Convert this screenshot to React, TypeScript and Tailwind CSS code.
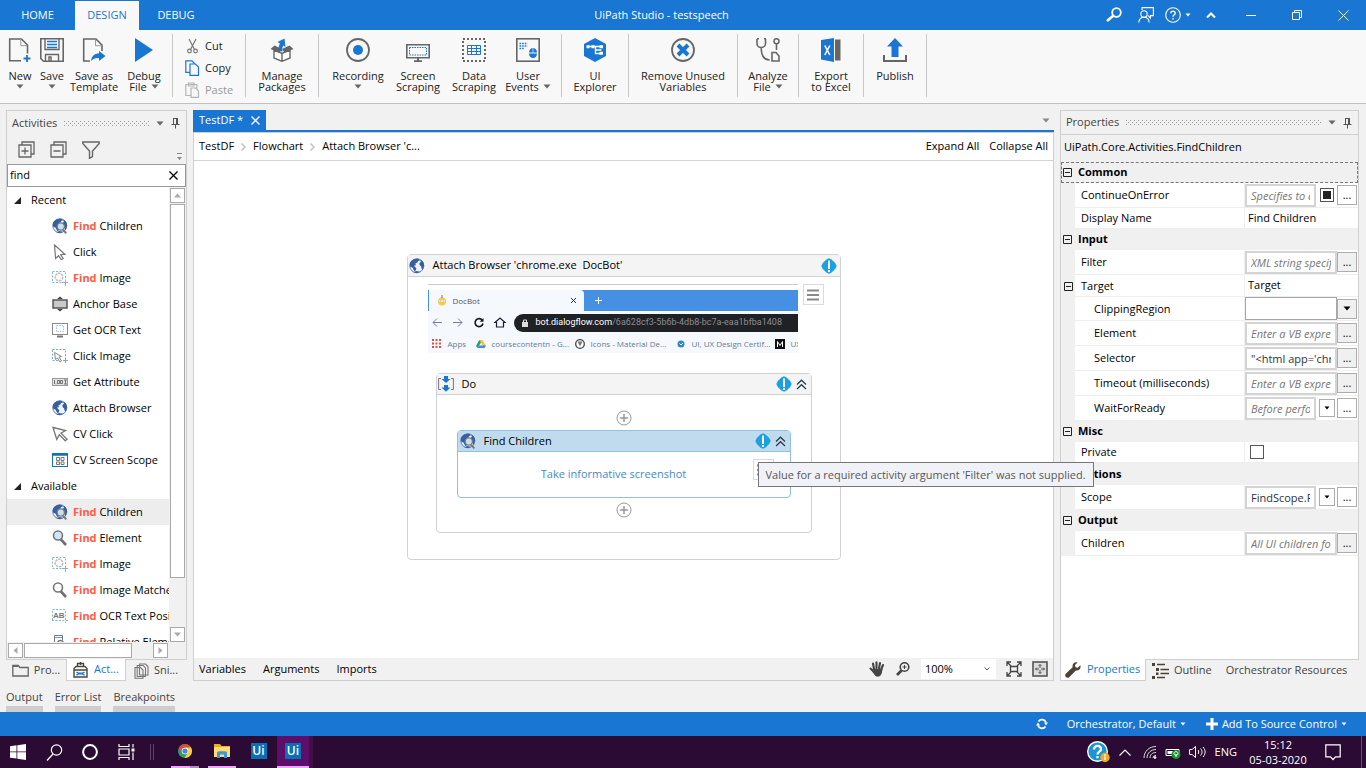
import type { ReactNode } from "react";
import clsx from "clsx";

type IconProps = { className?: string };

/* ---------- shared small icons ---------- */

function CaretDown({ className = "text-[#666]" }: IconProps) {
	return (
		<svg width="8" height="5" viewBox="0 0 8 5" className={clsx("shrink-0", className)}>
			<path d="M0.5 0.5h7L4 4.5z" fill="currentColor" />
		</svg>
	);
}

function SmallCaret() {
	return (
		<svg width="6" height="4" viewBox="0 0 6 4" className="shrink-0">
			<path d="M0.5 0.5h5L3 3.5z" fill="currentColor" />
		</svg>
	);
}

function PinIcon() {
	return (
		<svg width="9" height="12" viewBox="0 0 9 12" fill="none" stroke="#555" strokeWidth="1" className="shrink-0">
			<path d="M2.500 1v6M2 1.500h4.500M5.500 1v6M6.500 1v6M0.500 7.500h8M4.500 8v3.500" />
		</svg>
	);
}

function CloseIcon({ className }: IconProps) {
	return (
		<svg width="9" height="9" viewBox="0 0 9 9" className={className} fill="none" stroke="currentColor" strokeWidth="1.3">
			<path d="M0.500 0.500l8 8M8.500 0.500l-8 8" />
		</svg>
	);
}

function DotGrip({ id }: { id: string }) {
	return (
		<svg className="h-[5px] w-0 flex-1" shapeRendering="crispEdges">
			<pattern id={id} width="4" height="4" patternUnits="userSpaceOnUse">
				<path d="M0 0h1v1H0zM2 2h1v1H2z" fill="#9a9a9a" />
			</pattern>
			<rect width="100%" height="100%" fill={`url(#${id})`} />
		</svg>
	);
}

function GlobeIcon({ lens = false }: { lens?: boolean }) {
	return (
		<svg width="16" height="16" viewBox="0 0 16 16" className="shrink-0">
			<circle cx="7.800" cy="7.800" r="7" fill="#eef3fa" stroke="#5f80b3" strokeWidth="1" />
			<path d="M1.800 3.600C3.800 1 7 .2 10 1l1 1.600-2 .4-.5 1.500-2 .8.4 2-1.800.2L6 9l1.400 1.200-.6 2.400-1.600.4L3.600 9.800 1 8.400C.4 6.500 1 4.900 1.800 3.600z" fill="#365f9f" />
			<path d="M11.200 1.400c2.400 1 3.900 3.400 3.900 5.800l-1.400 4.600-1.200-1.200-.4-2.400-1.400-1-.4-2 1.600-1.400z" fill="#365f9f" />
			<path d="M4.300 14l3.200-1 3.700.8c-2 1.400-4.900 1.400-6.900.2z" fill="#365f9f" />
			{lens && (
				<>
					<path d="M11 11.500l3.200 3.800" stroke="#7a7a7a" strokeWidth="2" />
					<circle cx="8.800" cy="8.500" r="3.600" fill="#c9dff0" stroke="#7a7a7a" strokeWidth="1.300" />
				</>
			)}
		</svg>
	);
}

function CursorIcon() {
	return (
		<svg width="16" height="16" viewBox="0 0 16 16" fill="#fff" stroke="#777" strokeWidth="1.200" className="shrink-0">
			<path d="M2.500 1l10.500 9.200-4.300.5 2.500 3.800-2 1.200-2.600-4-3 2.800z" />
		</svg>
	);
}

function CvCursorIcon() {
	return (
		<svg width="16" height="16" viewBox="0 0 16 16" fill="#fff" stroke="#777" strokeWidth="1.300" className="shrink-0">
			<path d="M1 1.500l12.500 3-4.500 2.700 6 6-1.700 1.600-6-6-2.600 4.500z" />
		</svg>
	);
}

function FindImageIcon() {
	return (
		<svg width="16" height="16" viewBox="0 0 16 16" fill="none" className="shrink-0">
			<rect x="0.500" y="1.500" width="13" height="11" stroke="#7fb4dc" strokeDasharray="2 1.500" />
			<path d="M10 12.500h6M13.500 10v6" stroke="#7fb4dc" />
			<circle cx="7" cy="7" r="3.800" fill="#fafafa" stroke="#bbb" strokeWidth="1.500" strokeDasharray="2.500 0.800" />
		</svg>
	);
}

function AnchorIcon() {
	return (
		<svg width="16" height="16" viewBox="0 0 16 16" className="shrink-0">
			<rect x="1" y="4" width="14" height="8" fill="#c9c9c9" stroke="#555" strokeWidth="1.500" />
			<path d="M5 3l3-2.500L11 3zM5 13l3 2.500L11 13z" fill="#444" />
		</svg>
	);
}

function OcrIcon() {
	return (
		<svg width="16" height="16" viewBox="0 0 16 16" fill="none" className="shrink-0">
			<rect x="0.500" y="1.500" width="15" height="11" stroke="#888" />
			<rect x="4.500" y="3.500" width="7" height="6" stroke="#9cc9e8" strokeDasharray="1.500 1" />
			<path d="M5 14.500h6" stroke="#777" strokeWidth="2" />
		</svg>
	);
}

function ClickImageIcon() {
	return (
		<svg width="16" height="16" viewBox="0 0 16 16" fill="none" className="shrink-0">
			<rect x="0.500" y="1.500" width="13" height="11" stroke="#6fabd8" strokeDasharray="2 1.500" />
			<path d="M11 12.500h5M13.500 10v5" stroke="#6fabd8" />
			<path d="M2.500 4.500l7 4-2.500.5 2.500 4-1.500 1-2.500-4-2 1.500z" fill="#fff" stroke="#888" />
		</svg>
	);
}

function AttributeIcon() {
	return (
		<svg width="16" height="16" viewBox="0 0 16 16" fill="none" className="shrink-0">
			<rect x="0.500" y="4.500" width="15" height="7" fill="#e4e4e4" stroke="#999" />
			<path d="M2.500 6v4M4 9.500v.8M5.500 6.500h2v3h-2zM8.500 6.500h2v3h-2zM12 6h3M13.500 6v4M12 10h3" stroke="#666" strokeWidth="0.900" />
		</svg>
	);
}

function ScopeIcon() {
	return (
		<svg width="16" height="16" viewBox="0 0 16 16" fill="none" className="shrink-0">
			<rect x="0.500" y="1.500" width="15" height="13" stroke="#0d74b8" />
			<path d="M0 2.500h16" stroke="#0d74b8" strokeWidth="2.500" />
			<path d="M4.500 5.500h3v3h-3zM9 5.500h3v3H9zM4.500 10h3v2.500h-3zM9 10h3v2.500H9z" stroke="#777" />
		</svg>
	);
}

function LensIcon({ fill = "#cfe8f7" }: { fill?: string }) {
	return (
		<svg width="16" height="16" viewBox="0 0 16 16" className="shrink-0">
			<path d="M8.500 9l5.500 6" stroke="#707070" strokeWidth="2.600" />
			<circle cx="6" cy="5.500" r="4.500" fill={fill} stroke="#777" strokeWidth="1.600" />
		</svg>
	);
}

function AbIcon() {
	return (
		<svg width="16" height="16" viewBox="0 0 16 16" fill="none" className="shrink-0">
			<path d="M.5 12V1.500h13" stroke="#7fb4dc" strokeDasharray="2 1.500" />
			<path d="M0 12.500h16M13.500 3v12" stroke="#7fb4dc" strokeDasharray="2 1.500" />
			<text x="1" y="10" fontSize="8" fontWeight="700" fill="#777" fontFamily="Liberation Sans">AB</text>
		</svg>
	);
}

function RelativeIcon() {
	return (
		<svg width="16" height="16" viewBox="0 0 16 16" fill="none" className="shrink-0">
			<path d="M6 13.500H2.500v-12h8V6" stroke="#777" />
			<path d="M3 3.500h7" stroke="#5b9fd0" />
			<circle cx="8.500" cy="9.500" r="3" stroke="#777" strokeWidth="1.400" />
		</svg>
	);
}

function WarnIcon() {
	return (
		<svg width="16" height="16" viewBox="0 0 16 16" className="shrink-0">
			<path d="M8 .3l2.600 1.200 3.600 3.600 1.500 2.900-1.500 2.900-3.600 3.600L8 15.700l-2.600-1.200-3.600-3.600L.3 8l1.500-2.900 3.600-3.600z" fill="#1ba1e2" />
			<path d="M7 2.500h2V11H7zM7 12h2v2H7z" fill="#fff" />
		</svg>
	);
}

function DoubleUp() {
	return (
		<svg width="11" height="11" viewBox="0 0 11 11" fill="none" stroke="#2d3a4a" strokeWidth="1.200" className="shrink-0">
			<path d="M1 5.500L5.500 1.200 10 5.500M1 10l4.500-4.300L10 10" />
		</svg>
	);
}

function PlusCircle() {
	return (
		<button aria-label="Add activity" className="block size-4">
			<svg width="16" height="16" viewBox="0 0 16 16" fill="none" stroke="#999">
				<circle cx="8" cy="8" r="7" />
				<path d="M8 4v8M4 8h8" strokeWidth="1.500" />
			</svg>
		</button>
	);
}

/* ---------- title bar ---------- */

function TitleBar() {
	return (
		<header className="flex h-[30px] items-stretch bg-[#1976d2] text-[11px] text-white">
			<button className="w-[75px]">HOME</button>
			<button className="mt-px w-16 bg-[#f8f8f8] text-[#1976d2]">DESIGN</button>
			<button className="w-[74px]">DEBUG</button>
			<h1 className="flex flex-1 items-center justify-center pl-3">UiPath Studio - testspeech</h1>
			<div className="flex items-center">
				<button aria-label="Search" className="flex w-8 justify-center">
					<svg width="16" height="16" viewBox="0 0 16 16" fill="none" stroke="#fff">
						<circle cx="10.500" cy="5.500" r="4.300" strokeWidth="1.800" />
						<path d="M7.500 8.500L1 14" strokeWidth="2.600" />
					</svg>
				</button>
				<button aria-label="Feedback" className="flex w-8 justify-center">
					<svg width="16" height="16" viewBox="0 0 16 16" fill="none" stroke="#fff" strokeWidth="1.100">
						<circle cx="6" cy="7" r="3.200" />
						<path d="M.8 15.500c.3-3.500 2.200-5.300 5.200-5.300s5 1.800 5.200 5.300M4 3V.600h11.400v8h-3V11l-2.200-2.400" />
					</svg>
				</button>
				<button aria-label="Help" className="flex w-8 items-center justify-center gap-1">
					<svg width="16" height="16" viewBox="0 0 16 16" fill="none" stroke="#fff" strokeWidth="1.100">
						<circle cx="8" cy="8" r="7.300" />
						<path d="M5.800 6.300c0-3 4.600-2.800 4.400 0C10 7.700 8 7.800 8 9.800M8 11v1.400" strokeWidth="1.400" />
					</svg>
					<SmallCaret />
				</button>
				<button aria-label="Collapse ribbon" className="flex w-[34px] justify-center">
					<svg width="10" height="7" viewBox="0 0 10 7" fill="none" stroke="#fff" strokeWidth="2">
						<path d="M1 5.500l4-4 4 4" />
					</svg>
				</button>
				<button aria-label="Minimize" className="flex w-[46px] justify-center">
					<svg width="10" height="10" viewBox="0 0 10 10" stroke="#fff"><path d="M0 5.500h10" /></svg>
				</button>
				<button aria-label="Restore" className="flex w-[46px] justify-center">
					<svg width="10" height="10" viewBox="0 0 10 10" fill="none" stroke="#fff">
						<path d="M.5 2.500h7v7h-7zM2.500 2.500v-2h7v7h-2" />
					</svg>
				</button>
				<button aria-label="Close" className="flex w-[46px] justify-center">
					<svg width="11" height="11" viewBox="0 0 11 11" stroke="#fff"><path d="M.5.5l10 10M10.500.5l-10 10" /></svg>
				</button>
			</div>
		</header>
	);
}

/* ---------- ribbon ---------- */

function RibbonIcon({ children }: { children: ReactNode }) {
	return (
		<svg width="24" height="24" viewBox="0 0 24 24" fill="none" className="shrink-0">
			{children}
		</svg>
	);
}

type RibbonButtonProps = { width: string; icon: ReactNode; lines: string[]; caret?: "below" | "inline" };

function RibbonButton({ width, icon, lines, caret }: RibbonButtonProps) {
	return (
		<button className={clsx("flex flex-col items-center pt-2 whitespace-nowrap", width)}>
			<RibbonIcon>{icon}</RibbonIcon>
			<span className="mt-2 flex flex-col items-center leading-[11px]">
				{lines.map((line, i) => (
					<span key={line} className="flex items-center gap-1">
						{line}
						{caret === "inline" && i === lines.length - 1 && <CaretDown />}
					</span>
				))}
				{caret === "below" && (
					<span className="flex h-[11px] items-center">
						<CaretDown />
					</span>
				)}
			</span>
		</button>
	);
}

function Separator() {
	return <div className="mt-1 h-[63px] w-px bg-[#c8c8c8]" />;
}

const GRAY = "#666";
const BLUE = "#1976d2";

function Ribbon() {
	return (
		<div className="flex h-[74px] border-b border-[#c0c0c0] bg-[#f8f8f8] pl-1 text-[11px] text-[#222]">
			<RibbonButton width="w-8" lines={["New"]} caret="below" icon={
				<>
					<path d="M13 22.700H1.700V1h11.800l6 6v8.500" stroke={GRAY} strokeWidth="1.600" />
					<path d="M12.800 1.500v6.200h6.500" stroke="#999" />
					<path d="M19 17v7M15.500 20.500h7" stroke={BLUE} strokeWidth="1.800" />
				</>
			} />
			<RibbonButton width="w-8" lines={["Save"]} caret="below" icon={
				<>
					<path d="M.8.8h22.400v22.400H3.500L.8 20.500z" stroke={GRAY} strokeWidth="1.600" />
					<path d="M5 1v10.500h14V1M5.500 23v-6.500h13V23M9 23v-4h2v4" stroke={GRAY} strokeWidth="1.400" />
					<path d="M7 3.500h10M7 6.500h10M7 9.500h10" stroke={BLUE} strokeWidth="1.300" />
				</>
			} />
			<RibbonButton width="w-[52px]" lines={["Save as", "Template"]} icon={
				<>
					<path d="M8 23H1.700V1H14l6 6v6" stroke={GRAY} strokeWidth="1.600" />
					<path d="M13.500 1.500v6.200H20" stroke="#999" />
					<path d="M9 23c.5-5 3.500-7.500 8-7.500V13l6.500 5-6.500 5v-3c-3.500-.3-6 .8-8 3z" fill={BLUE} />
				</>
			} />
			<RibbonButton width="w-12" lines={["Debug", "File"]} caret="inline" icon={<path d="M3 0v24l18-12z" fill={BLUE} />} />
			<div className="w-1" />
			<Separator />
			<div className="flex w-[72px] flex-col pt-[5px] pl-3">
				<button className="flex h-[22px] items-center gap-1">
					<svg width="16" height="16" viewBox="0 0 16 16" fill="none" stroke="#777" strokeWidth="1.200">
						<path d="M4 1l5.500 10.500M11 1L5.500 11.500" />
						<circle cx="4.500" cy="13" r="1.800" />
						<circle cx="10.500" cy="13" r="1.800" />
					</svg>
					Cut
				</button>
				<button className="flex h-[22px] items-center gap-1">
					<svg width="16" height="16" viewBox="0 0 16 16" fill="#f8f8f8" stroke={BLUE} strokeWidth="1.200">
						<path d="M.8.8h6l2.500 2.500v9H.8z" />
						<path d="M5 4h5.500L13.500 7v8.300H5z" />
					</svg>
					Copy
				</button>
				<button disabled className="flex h-[22px] items-center gap-1 text-[#999]">
					<svg width="16" height="16" viewBox="0 0 16 16" fill="#f8f8f8" stroke="#b5b5b5" strokeWidth="1.200">
						<path d="M.8 2.500h11v11H.8zM3.500 1h5.500v3H3.500z" />
						<path d="M6 6h4.500L13.500 9v6.300H6z" />
					</svg>
					Paste
				</button>
			</div>
			<Separator />
			<RibbonButton width="w-[72px]" lines={["Manage", "Packages"]} icon={
				<>
					<path d="M4 12v8l8 3.300 8-3.300v-8l-8 3.500zM12 15.500V23" fill="#fff" stroke={GRAY} strokeWidth="1.400" />
					<path d="M4.500 7.500l7.500 3.500-2.500 3.700L.5 11zM19.500 7.500L12 11l2.500 3.700 9-3.700z" fill={GRAY} />
					<path d="M9 13c-.5-3-.3-5.500 1-7.500L7.500 4 14.500.5 15.500 9l-2.200-1.500C12.300 9 12 11 12.500 13.500z" fill={BLUE} />
				</>
			} />
			<Separator />
			<div className="w-[5px]" />
			<RibbonButton width="w-[68px]" lines={["Recording"]} caret="below" icon={
				<>
					<circle cx="12" cy="12" r="11" stroke={GRAY} strokeWidth="1.800" />
					<circle cx="12" cy="12" r="5" fill={BLUE} />
				</>
			} />
			<RibbonButton width="w-[52px]" lines={["Screen", "Scraping"]} icon={
				<>
					<path d="M.8 6.800h22.400v13H.8z" stroke={GRAY} strokeWidth="1.600" />
					<path d="M3.500 9.500h17v7.500h-17z" stroke={BLUE} strokeDasharray="1.500 1" />
					<path d="M12 20v3M8 23.300h8" stroke={GRAY} strokeWidth="2" />
				</>
			} />
			<RibbonButton width="w-[60px]" lines={["Data", "Scraping"]} icon={
				<>
					<rect x="1" y="1" width="22" height="22" stroke={GRAY} strokeWidth="2" strokeDasharray="2 2" />
					<path d="M5.500 7.500h13v9h-13zM5.500 10.500h13M5.500 13.500h13M9.500 7.500v9M14.500 7.500v9" stroke={BLUE} />
				</>
			} />
			<RibbonButton width="w-12" lines={["User", "Events"]} caret="inline" icon={
				<>
					<rect x=".8" y=".8" width="22.400" height="22.400" stroke={GRAY} strokeWidth="1.600" />
					<path d="M3.500 5.500h8M3.500 8h8M3.500 10.500h5" stroke={BLUE} strokeWidth="1.600" strokeDasharray="1.600 1" />
					<path d="M13 14.500c0-6 8-6 8 0zM13 15.500h8c0 6-8 6-8 0z" fill={BLUE} />
					<path d="M17 10v4.500" stroke="#f8f8f8" strokeWidth="0.700" />
				</>
			} />
			<div className="w-[9px]" />
			<Separator />
			<RibbonButton width="w-[66px]" lines={["UI", "Explorer"]} icon={
				<>
					<path d="M12 0l11 6v12l-11 6-11-6V6z" fill={BLUE} />
					<path d="M4.500 8.500h14M9.500 8.500h3v7h6M12.500 12h6" stroke="#fff" strokeWidth="1.400" />
					<path d="M3.500 7.200h3v3h-3zM8.500 7.200h3v3h-3zM16.500 7.200h3.500v3h-3.500zM16.500 13.800h3.500v3h-3.500z" fill="#fff" />
				</>
			} />
			<Separator />
			<RibbonButton width="w-[108px]" lines={["Remove Unused", "Variables"]} icon={
				<>
					<circle cx="12" cy="12" r="11" stroke={GRAY} strokeWidth="1.800" />
					<path d="M7 7l10 10M17 7L7 17" stroke={BLUE} strokeWidth="4" />
				</>
			} />
			<Separator />
			<RibbonButton width="w-[60px]" lines={["Analyze", "File"]} caret="inline" icon={
				<>
					<path d="M1 .8h2M8 .8h2M1 1v4.500C1 8 3 9.500 5.200 9.500S9.500 8 9.500 5.500V1M5.200 9.500c0 7 1.800 12.500 8.500 12.500" stroke={GRAY} strokeWidth="1.600" />
					<circle cx="20.500" cy="3.300" r="2.500" stroke={GRAY} strokeWidth="1.500" />
					<path d="M20.500 6v6M16 14.500h4l3 3.500v5h-7z" stroke={GRAY} strokeWidth="1.600" />
				</>
			} />
			<Separator />
			<RibbonButton width="w-16" lines={["Export", "to Excel"]} icon={
				<>
					<path d="M2 2l13-2v24L2 21.500z" fill={BLUE} />
					<path d="M16 1.500h5.500v21H16z" fill={GRAY} />
					<path d="M5.800 7.500l5 9.500M10.800 7.500l-5 9.500" stroke="#fff" strokeWidth="1.600" />
				</>
			} />
			<Separator />
			<RibbonButton width="w-[62px]" lines={["Publish"]} icon={
				<>
					<path d="M12 0l8 8.500h-4.500V19h-7V8.500H4z" fill={BLUE} />
					<path d="M1 17v6h22v-6" stroke={GRAY} strokeWidth="2" />
				</>
			} />
			<Separator />
		</div>
	);
}

/* ---------- activities panel ---------- */

type Activity = { icon: ReactNode; find?: boolean; label: string; active?: boolean };

const recent: Activity[] = [
	{ icon: <GlobeIcon lens />, find: true, label: "Children" },
	{ icon: <CursorIcon />, label: "Click" },
	{ icon: <FindImageIcon />, find: true, label: "Image" },
	{ icon: <AnchorIcon />, label: "Anchor Base" },
	{ icon: <OcrIcon />, label: "Get OCR Text" },
	{ icon: <ClickImageIcon />, label: "Click Image" },
	{ icon: <AttributeIcon />, label: "Get Attribute" },
	{ icon: <GlobeIcon />, label: "Attach Browser" },
	{ icon: <CvCursorIcon />, label: "CV Click" },
	{ icon: <ScopeIcon />, label: "CV Screen Scope" },
];

const available: Activity[] = [
	{ icon: <GlobeIcon lens />, find: true, label: "Children", active: true },
	{ icon: <LensIcon />, find: true, label: "Element" },
	{ icon: <FindImageIcon />, find: true, label: "Image" },
	{ icon: <LensIcon fill="#fff" />, find: true, label: "Image Matches" },
	{ icon: <AbIcon />, find: true, label: "OCR Text Position" },
	{ icon: <RelativeIcon />, find: true, label: "Relative Element" },
];

function TreeGroup({ title, items }: { title: string; items: Activity[] }) {
	return (
		<li>
			<div className="flex h-[26px] items-center gap-[10px] pl-[7px]">
				<svg width="7" height="7" viewBox="0 0 7 7"><path d="M7 0v7H0z" fill="#222" /></svg>
				{title}
			</div>
			<ul>
				{items.map((item) => (
					<li key={item.label} className={clsx("flex h-[26px] items-center gap-[5px] pl-[45px] whitespace-nowrap", item.active && "bg-[#ededed]")}>
						{item.icon}
						<span>
							{item.find && <b className="font-bold text-[#ff5a43]">Find </b>}
							{item.label}
						</span>
					</li>
				))}
			</ul>
		</li>
	);
}

function ScrollArrow({ d, label }: { d: string; label: string }) {
	return (
		<button aria-label={label} className="flex size-[15px] shrink-0 items-center justify-center border border-[#aaa] bg-white">
			<svg width="7" height="7" viewBox="0 0 7 7"><path d={d} fill="#aaa" /></svg>
		</button>
	);
}

function ActivitiesPanel() {
	return (
		<aside className="flex w-[181px] shrink-0 flex-col">
			<div className="flex grow flex-col border border-[#cfcfcf]">
				<div className="flex h-6 items-center gap-[7px] pr-[6px] pl-[5px]">
					<h2 className="text-[11px] text-[#444]">Activities</h2>
					<DotGrip id="grip-activities" />
					<CaretDown />
					<PinIcon />
				</div>
				<div className="flex h-[29px] items-center gap-[15px] pl-[11px]">
					<button aria-label="Expand all">
						<svg width="17" height="17" viewBox="0 0 17 17" fill="none" stroke="#666" strokeWidth="1.300">
							<path d="M1 4h12v12H1zM4 3.500V1h12v12h-2.500M7 6.500v7M3.500 10h7" />
						</svg>
					</button>
					<button aria-label="Collapse all">
						<svg width="17" height="17" viewBox="0 0 17 17" fill="none" stroke="#666" strokeWidth="1.300">
							<path d="M1 4h12v12H1zM4 3.500V1h12v12h-2.500M3.500 10h7" />
						</svg>
					</button>
					<button aria-label="Filter">
						<svg width="18" height="18" viewBox="0 0 18 18" fill="none" stroke="#666" strokeWidth="1.400">
							<path d="M.8 1h16.400v1.500L10.500 10v5.500l-3 1.800V10L.8 2.500z" />
						</svg>
					</button>
					<svg width="5" height="7" viewBox="0 0 5 7" className="mr-1 mb-1 ml-auto self-end" fill="#888"><path d="M0 0h5v1H0zM0 4h5L2.500 7z" /></svg>
				</div>
				<div className="flex h-[23px] items-center border border-[#999] bg-white pr-[7px]">
					<input aria-label="Search activities" defaultValue="find" className="w-0 flex-1 pl-[2px] text-[11px] outline-none" />
					<button aria-label="Clear search"><CloseIcon /></button>
				</div>
				<div className="flex min-h-0 grow basis-[0px]">
					<ul className="w-0 flex-1 overflow-hidden bg-white text-[11px] text-black">
						<TreeGroup title="Recent" items={recent} />
						<TreeGroup title="Available" items={available} />
					</ul>
					<div className="flex w-[17px] flex-col items-center gap-px pt-px">
						<ScrollArrow label="Scroll up" d="M0 5.500h7l-3.500-4z" />
						<div className="w-[15px] flex-[8] border border-[#aaa] bg-white" />
						<div className="flex-1" />
						<ScrollArrow label="Scroll down" d="M0 1.500h7l-3.500 4z" />
					</div>
				</div>
				<div className="flex h-[17px] items-center gap-px pr-[18px] pl-px">
					<ScrollArrow label="Scroll left" d="M5.500 0v7l-4-3.500z" />
					<div className="h-[15px] w-[108px] border border-[#aaa] bg-white" />
					<div className="flex-1" />
					<ScrollArrow label="Scroll right" d="M1.500 0v7l4-3.500z" />
				</div>
			</div>
			<div className="flex h-[21px] text-[11px] text-[#444]">
				<button className="flex w-[60px] items-center justify-center gap-[5px]">
					<svg width="17" height="13" viewBox="0 0 17 13" fill="none" stroke="#666" strokeWidth="1.300"><path d="M.8 12V1.500h5.500l1.500 2h8.400V12z" /><path d="M1 2h5" strokeWidth="2" /></svg>
					Pro...
				</button>
				<button className="-mt-px flex w-[60px] items-center justify-center gap-[6px] border border-t-0 border-[#cfcfcf] bg-white text-[#1976d2]">
					<svg width="15" height="16" viewBox="0 0 15 16" fill="none" stroke="#4a463c" strokeWidth="1.400">
						<path d="M1 15V6.500l2-2h9l2 2V15zM1 8h13M4.500 4V1.500h6V4M7.500 0v3" />
						<path d="M3.500 10l2 1.300h4l2-1.300M3.500 13.200l2-1.300h4l2 1.300" stroke="#1976d2" />
					</svg>
					Act...
				</button>
				<button className="flex w-[60px] items-center justify-center gap-[5px]">
					<svg width="15" height="16" viewBox="0 0 15 16" fill="#f1f1f1" stroke="#777" strokeWidth="1.100">
						<path d="M5.500 1h6L14 3.500V12H5.500zM3.200 2.500h6L11.500 5v8.500H3.200zM1 4.500h5.500L9 7v8.300H1z" />
					</svg>
					Sni...
				</button>
			</div>
		</aside>
	);
}

/* ---------- designer ---------- */

const bookmarks: { label: string; icon: ReactNode; width: string }[] = [
	{ label: "Apps", width: "w-[44px]", icon: <path d="M0 1h9M0 4.500h9M0 8h9" stroke="#e0503f" strokeWidth="2" strokeDasharray="2 1.500" /> },
	{
		label: "coursecontentn - G...",
		width: "w-[99px]",
		icon: <><path d="M3.300 1h3l3.700 6H7z" fill="#fbc02d" /><path d="M3.300 1L0 7l1.500 2L5 3.500z" fill="#1fa463" /><path d="M1.500 9L3 6.500h7L8.500 9z" fill="#4285f4" /></>,
	},
	{ label: "Icons - Material De...", width: "w-[101px]", icon: <><circle cx="5" cy="5" r="4.300" fill="#fff" stroke="#444" strokeWidth="1.300" /><path d="M2.500 2.500h5L5 7.500z" fill="#777" /></> },
	{ label: "UI, UX Design Certif...", width: "w-[99px]", icon: <><circle cx="5" cy="5" r="3.500" fill="#2d87c9" /><path d="M3.500 4.500L5 6l2-2" stroke="#fff" fill="none" /></> },
	{ label: "UX", width: "w-[30px]", icon: <><path d="M0 0h10v10H0z" fill="#111" /><path d="M2.500 8V2.500L5 6.500l2.500-4V8" stroke="#fff" fill="none" /></> },
];

function BrowserPreview() {
	return (
		<div className="w-[370px] overflow-hidden border-t border-[#ccc] bg-white pt-[5px] text-[8px] text-[#555]">
			<div className="flex h-[21px] bg-[#4690e4] pl-px">
				<div className="flex w-[155px] items-center gap-[6px] rounded-tr bg-[#f5f9fe] px-2">
					<svg width="10" height="11" viewBox="0 0 10 11">
						<circle cx="5" cy="6.500" r="4" fill="#f7c948" />
						<path d="M2.500 5h5v2h-5z" fill="#fff" />
						<path d="M3.300 5.500h1v1h-1zM5.700 5.500h1v1h-1zM4.500 0h1v3h-1z" fill="#5673a0" />
					</svg>
					<span className="flex-1">DocBot</span>
					<svg width="5" height="5" viewBox="0 0 5 5" stroke="#234"><path d="M0 0l5 5M5 0L0 5" /></svg>
				</div>
				<svg width="7" height="7" viewBox="0 0 7 7" stroke="#fff" className="mt-[7px] ml-[11px]"><path d="M3.500 0v7M0 3.500h7" /></svg>
			</div>
			<div className="flex h-[23px] items-center bg-[#f5f9fe] pl-1">
				<svg width="78" height="11" viewBox="0 0 78 11" fill="none">
					<path d="M10 5.500H1M5 1.500l-4 4 4 4M21 5.500h9M26 1.500l4 4-4 4" stroke="#7d7a9c" />
					<path d="M50.500 3.500a4 4 0 1 0 .5 3" stroke="#17171f" strokeWidth="1.600" />
					<path d="M51.500 1v3.800h-3.800z" fill="#17171f" />
					<path d="M64.500 10V5.500H63L68 1l5 4.500h-1.500V10z" stroke="#1c1a3a" strokeWidth="1.200" />
				</svg>
				<div className="ml-1 flex h-[18px] flex-1 items-center rounded-l-full bg-[#202124] pl-2 text-[#8a8d91]">
					<svg width="6" height="8" viewBox="0 0 6 8"><path d="M0 3h6v5H0z" fill="#ddd" /><path d="M1.500 3V1h3v2" fill="none" stroke="#ddd" /></svg>
					<span className="ml-2 whitespace-nowrap text-[9px] font-['Roboto',sans-serif]"><span className="text-white">bot.dialogflow.com</span>/6a628cf3-5b6b-4db8-bc7a-eaa1bfba1408</span>
				</div>
			</div>
			<div className="flex h-[19px] items-center bg-[#f5f9fe] pl-1 text-[#667a99]">
				{bookmarks.map((b) => (
					<div key={b.label} className={clsx("flex shrink-0 items-center gap-[6px] overflow-hidden whitespace-nowrap", b.width)}>
						<svg width="10" height="10" viewBox="0 0 10 10" className="shrink-0">{b.icon}</svg>
						{b.label}
					</div>
				))}
			</div>
		</div>
	);
}

function Lines() {
	return (
		<svg width="12" height="12" viewBox="0 0 12 12" stroke="#888" strokeWidth="2"><path d="M0 1.500h12M0 6h12M0 10.500h12" /></svg>
	);
}

function FindChildrenCard() {
	return (
		<section className="relative w-full rounded-sm border border-[#92c0e0] bg-white">
			<div className="flex h-[21px] items-center gap-1 border-b border-[#92c0e0] bg-[#c1dbee] pr-1 pl-[2px]">
				<GlobeIcon lens />
				<h3 className="ml-1 flex-1">Find Children</h3>
				<WarnIcon />
				<DoubleUp />
			</div>
			<div className="flex h-[45px] items-center justify-center pr-5">
				<a href="#screenshot" className="text-[#3f8ad0]">Take informative screenshot</a>
			</div>
			<button aria-label="Options" className="absolute top-7 right-4 flex size-[21px] items-center justify-center border border-[#d8dbe4] bg-white"><Lines /></button>
			<div role="tooltip" className="absolute top-[31px] left-[300px] z-20 border border-[#767676] bg-[#f1f2f7] px-[7px] leading-[23px] whitespace-nowrap text-[#575757]">
				Value for a required activity argument 'Filter' was not supplied.
			</div>
		</section>
	);
}

function DoIcon() {
	return (
		<svg width="16" height="16" viewBox="0 0 16 16" fill="none" className="shrink-0">
			<path d="M3 2.500H.6v11H3M13 2.500h2.400v11H13" stroke="#777" />
			<path d="M6 0h4v3h2.500L8 7 3.500 3H6zM6 9h4v2.500h2.500L8 15.800l-4.500-4.300H6z" fill="#1976d2" />
		</svg>
	);
}

function Chevron() {
	return (
		<svg width="7" height="8" viewBox="0 0 7 8" fill="none" stroke="#c4c4c4" strokeWidth="1.500"><path d="M1.500 0.500l3.500 3.500-3.500 3.500" /></svg>
	);
}

function Designer() {
	return (
		<main className="flex min-w-0 flex-1 flex-col text-[11px] text-black">
			<div className="flex h-[22px] items-end justify-between border-b-2 border-[#1976d2]">
				<div className="flex h-5 items-center gap-2 bg-[#1976d2] px-[6px] text-white">
					TestDF *
					<button aria-label="Close tab"><CloseIcon /></button>
				</div>
				<div className="flex h-5 items-center pr-1"><CaretDown className="text-[#888]" /></div>
			</div>
			<div className="flex flex-1 flex-col border border-[#cfcfcf] bg-white">
				<div className="flex h-7 items-center gap-[6px] border-b border-[#d4d4d4] px-[5px]">
					<nav aria-label="Breadcrumb" className="flex items-center gap-[6px]">
						<a href="#testdf">TestDF</a>
						<Chevron />
						<a href="#flowchart">Flowchart</a>
						<Chevron />
						<a href="#attach">Attach Browser 'c...</a>
					</nav>
					<button className="mr-1 ml-auto">Expand All</button>
					<button>Collapse All</button>
				</div>
				<div className="flex flex-1 justify-center pt-[93px]">
					<section className="flex h-[306px] w-[434px] flex-col rounded-sm border border-[#d2d2d2]">
						<div className="flex h-[22px] items-center gap-2 border-b border-[#d2d2d2] bg-[#f4f4f4] pr-[3px] pl-px">
							<GlobeIcon />
							<h2 className="flex-1 whitespace-pre">Attach Browser 'chrome.exe  DocBot'</h2>
							<WarnIcon />
						</div>
						<div className="mt-[7px] flex items-start gap-[5px] pl-5">
							<BrowserPreview />
							<button aria-label="Options" className="flex size-[21px] items-center justify-center border border-[#d8dbe4] bg-white"><Lines /></button>
						</div>
						<section className="mx-7 mt-5 h-40 rounded-sm border border-[#d2d2d2]">
							<div className="flex h-[21px] items-center gap-1 border-b border-[#d2d2d2] bg-[#f4f4f4] pr-1 pl-px">
								<DoIcon />
								<h3 className="ml-1 flex-1">Do</h3>
								<WarnIcon />
								<DoubleUp />
							</div>
							<div className="flex flex-col items-center gap-1 px-5 pt-[15px]">
								<PlusCircle />
								<FindChildrenCard />
								<PlusCircle />
							</div>
						</section>
					</section>
				</div>
				<div className="flex h-[22px] items-center bg-[#f1f1f1] pr-[5px] pl-[5px]">
					<div className="flex flex-1 gap-[17px]">
						<button>Variables</button>
						<button>Arguments</button>
						<button>Imports</button>
					</div>
					<div className="flex items-center gap-[10px]">
						<button aria-label="Pan">
							<svg width="16" height="16" viewBox="0 0 16 16" fill="none" stroke="#444" strokeWidth="2.100" strokeLinecap="round">
								<path d="M5 8L4 2.500M7.500 7V1.200M10 7.500L11 2M12 9l2-5M5 11L1.500 7.500" />
								<path d="M5 8l8 .5-1 4.500-1.500 2H7l-3-4z" fill="#444" strokeWidth="1" />
							</svg>
						</button>
						<button aria-label="Reset zoom">
							<svg width="16" height="16" viewBox="0 0 16 16" fill="none" stroke="#444">
								<circle cx="9.500" cy="6" r="4.300" strokeWidth="1.600" />
								<path d="M6.500 9.500L2 14" strokeWidth="2.600" />
								<path d="M9.500 4v4M7.500 6h4" />
							</svg>
						</button>
						<div className="relative">
							<select aria-label="Zoom" className="h-5 w-[75px] appearance-none bg-white px-1">
								<option>100%</option>
							</select>
							<svg width="6" height="4" viewBox="0 0 6 4" fill="none" stroke="#555" className="absolute top-2 right-[6px]"><path d="M.5.5L3 3 5.500.5" /></svg>
						</div>
						<button aria-label="Fit to screen">
							<svg width="16" height="16" viewBox="0 0 16 16" fill="none" stroke="#444" strokeWidth="1.300">
								<path d="M4.500 5.500h7v5h-7z" />
								<path d="M1 1l4 4M15 1l-4 4M1 15l4-4M15 15l-4-4M1 5V1h4M11 1h4v4M1 11v4h4M11 15h4v-4" />
							</svg>
						</button>
						<button aria-label="Overview">
							<svg width="16" height="16" viewBox="0 0 16 16" fill="none" stroke="#555">
								<rect x="1" y="1" width="14" height="14" fill="#ddd" strokeWidth="1.600" />
								<path d="M8 7V3.500L6.500 5M8 3.500L9.500 5M8 9v3.500L6.500 11M8 12.500L9.500 11M7 8H3.500L5 6.500M3.500 8L5 9.500M9 8h3.500L11 6.500M12.500 8L11 9.500" />
							</svg>
						</button>
					</div>
				</div>
			</div>
		</main>
	);
}

/* ---------- properties panel ---------- */

function CollapseBox() {
	return (
		<svg width="9" height="9" viewBox="0 0 9 9" fill="none" stroke="#222" className="shrink-0"><path d="M.5.5h8v8h-8zM2 4.500h5" /></svg>
	);
}

function Category({ title, focused, height = "h-[21px]" }: { title: string; focused?: boolean; height?: string }) {
	return (
		<div className={clsx("flex items-center gap-[6px] bg-[#f0f0f0] font-bold", height, focused ? "border border-dashed border-[#777] px-px" : "px-[2px]")}>
			<CollapseBox />
			{title}
		</div>
	);
}

type PropProps = {
	label: string;
	id: string;
	height?: string;
	nested?: boolean;
	toggle?: boolean;
	children: ReactNode;
};

function Prop({ label, id, height = "h-[25px]", nested, toggle, children }: PropProps) {
	return (
		<div className={clsx("flex bg-white", height)}>
			<div className="flex w-[14px] items-center justify-center bg-[#f0f0f0]">{toggle && <CollapseBox />}</div>
			<label htmlFor={id} className={clsx("flex w-[170px] items-center border-r border-b border-[#eee] pt-px", nested ? "pl-[19px]" : "pl-[6px]")}>
				{label}
			</label>
			<div className="flex min-w-0 flex-1 items-center border-b border-[#eee] pr-px">{children}</div>
		</div>
	);
}

function Field({ id, placeholder, value }: { id: string; placeholder?: string; value?: string }) {
	return (
		<input
			id={id}
			placeholder={placeholder}
			defaultValue={value}
			className="h-[23px] w-0 flex-1 border-2 border-[#d4d4d4] bg-white px-1 text-[#2b3340] outline-none placeholder:text-[#767676] placeholder:italic"
		/>
	);
}

function Dots({ name, plain }: { name: string; plain?: boolean }) {
	return (
		<button
			aria-label={"Edit " + name}
			className={clsx("flex h-5 w-5 shrink-0 justify-center border border-[#adadad] leading-[18px]", plain ? "items-end bg-white" : "items-center bg-[#f0f0f0]")}
		>
			...
		</button>
	);
}

function DropButton({ name }: { name: string }) {
	return (
		<button aria-label={"Choose " + name} className="mr-[2px] ml-[3px] flex h-[18px] w-4 items-center justify-center border border-[#adadad] bg-white text-black">
			<SmallCaret />
		</button>
	);
}

function PropertiesPanel() {
	return (
		<aside className="flex w-[299px] shrink-0 flex-col text-[11px] text-black">
			<div className="flex flex-1 flex-col border border-[#cfcfcf] bg-white">
				<div className="flex h-6 items-center gap-[7px] border-b border-[#cfcfcf] bg-[#f1f1f1] pr-[6px] pl-[5px] text-[#444]">
					<h2>Properties</h2>
					<DotGrip id="grip-properties" />
					<CaretDown />
					<PinIcon />
				</div>
				<p className="flex h-[27px] items-center bg-[#f0f0f0] pb-[2px] pl-[3px]">UiPath.Core.Activities.FindChildren</p>
				<Category title="Common" focused />
				<Prop id="coe" label="ContinueOnError">
					<Field id="coe" placeholder="Specifies to continue" />
					<button aria-label="Toggle ContinueOnError" className="mr-[3px] ml-1 flex size-[14px] items-center justify-center border border-[#555] bg-white">
						<span className="block size-2 bg-[#222]" />
					</button>
					<Dots name="ContinueOnError" plain />
				</Prop>
				<Prop id="name" label="Display Name" height="h-[21px]">
					<input id="name" defaultValue="Find Children" className="w-0 flex-1 px-[3px] outline-none" />
				</Prop>
				<Category title="Input" />
				<Prop id="filter" label="Filter">
					<Field id="filter" placeholder="XML string specifying" />
					<Dots name="Filter" />
				</Prop>
				<Prop id="target" label="Target" height="h-[22px]" toggle>
					<output id="target" className="px-[3px]">Target</output>
				</Prop>
				<Prop id="clip" label="ClippingRegion" height="h-6" nested>
					<input id="clip" className="h-[23px] w-0 flex-1 border border-[#a6a6a6] bg-white outline-none" />
					<button aria-label="Choose ClippingRegion" className="flex size-5 items-center justify-center border border-[#adadad] bg-[#f0f0f0]"><CaretDown className="text-black" /></button>
				</Prop>
				<Prop id="element" label="Element" nested>
					<Field id="element" placeholder="Enter a VB expression" />
					<Dots name="Element" />
				</Prop>
				<Prop id="selector" label="Selector" nested>
					<Field id="selector" value={"\"<html app='chrome.exe' title='DocBot' />\""} />
					<Dots name="Selector" />
				</Prop>
				<Prop id="timeout" label="Timeout (milliseconds)" nested>
					<Field id="timeout" placeholder="Enter a VB expression" />
					<Dots name="Timeout" />
				</Prop>
				<Prop id="wait" label="WaitForReady" nested>
					<Field id="wait" placeholder="Before performing" />
					<DropButton name="WaitForReady" />
					<Dots name="WaitForReady" plain />
				</Prop>
				<Category title="Misc" />
				<Prop id="private" label="Private" height="h-[21px]">
					<input id="private" type="checkbox" className="ml-[5px] size-[14px] appearance-none border border-[#555] bg-white" />
				</Prop>
				<Category title="Options" height="h-[22px]" />
				<Prop id="scope" label="Scope">
					<Field id="scope" value="FindScope.FIND_CHILDREN" />
					<DropButton name="Scope" />
					<Dots name="Scope" plain />
				</Prop>
				<Category title="Output" />
				<Prop id="children" label="Children">
					<Field id="children" placeholder="All UI children found" />
					<Dots name="Children" />
				</Prop>
			</div>
			<div className="flex h-[21px] text-[#444]">
				<button className="-mt-px flex w-[86px] items-center gap-[6px] border border-t-0 border-[#cfcfcf] bg-white pl-1 text-[#1976d2]">
					<svg width="16" height="16" viewBox="0 0 16 16" fill="#4a4234"><path d="M15.300 3.200l-2.600 2.500-2.200-.5-.5-2.200L12.500.5C9.700-.3 7 2 7.600 5.200L.8 11.800c-2 2.200 1.200 5.400 3.400 3.400l6.600-6.800c3.300.6 5.500-2.200 4.500-5.200z" /></svg>
					Properties
				</button>
				<button className="flex items-center gap-[5px] pl-[6px]">
					<svg width="17" height="16" viewBox="0 0 17 16" stroke="#4a4234" fill="#4a4234" strokeWidth="1.300">
						<path d="M0 0h3v3H0zM4 5h3v3H4zM4 9.500h2.500V12H4zM0 13h3v3H0z" stroke="none" />
						<path d="M5 1.500h8M8.500 6.500H17M8.500 10.500H17M5 14.500h8" />
					</svg>
					Outline
				</button>
				<button className="pl-[14px] whitespace-nowrap">Orchestrator Resources</button>
			</div>
		</aside>
	);
}

/* ---------- status bar and taskbar ---------- */

function StatusBar() {
	return (
		<div className="flex h-6 items-center justify-end bg-[#1976d2] pr-[19px] text-[11px] text-white">
			<button aria-label="Refresh" className="mr-[19px]">
				<svg width="12" height="12" viewBox="0 0 12 12" fill="none" stroke="#fff" strokeWidth="1.800">
					<path d="M2 7.500a4.200 4.200 0 0 0 7.500 1M10 4.500a4.200 4.200 0 0 0-7.500-1" />
					<path d="M0 7.500h4L2 4.500zM12 4.500H8l2 3z" fill="#fff" stroke="none" />
				</svg>
			</button>
			<button className="mr-5 flex items-center gap-1">Orchestrator, Default <SmallCaret /></button>
			<button className="flex items-center gap-1">
				<svg width="12" height="12" viewBox="0 0 12 12" stroke="#fff" strokeWidth="3"><path d="M6 0v12M0 6h12" /></svg>
				Add To Source Control <SmallCaret />
			</button>
		</div>
	);
}

function UiLogo() {
	return <span className="flex h-4 w-4 items-center justify-center bg-[#0b6fb5] text-[12px] leading-4 font-semibold text-white">Ui</span>;
}

function Taskbar() {
	return (
		<footer className="flex h-8 items-stretch bg-[#2b0a33] text-[11px] text-white">
			<button aria-label="Start" className="flex w-9 items-center justify-center">
				<svg width="16" height="16" viewBox="0 0 16 16" fill="#fff"><path d="M0 2.200L6.500 1.300v6.200H0zM7.300 1.200L16 0v7.500H7.300zM0 8.300h6.500v6.300L0 13.700zM7.300 8.300H16V16l-8.700-1.200z" /></svg>
			</button>
			<button aria-label="Search" className="flex w-9 items-center justify-center">
				<svg width="17" height="17" viewBox="0 0 17 17" fill="none" stroke="#fff" strokeWidth="1.200"><circle cx="10.500" cy="6" r="5.200" /><path d="M7 10l-6 6.500" /></svg>
			</button>
			<button aria-label="Cortana" className="flex w-9 items-center justify-center">
				<svg width="16" height="16" viewBox="0 0 16 16" fill="none" stroke="#fff" strokeWidth="2"><circle cx="8" cy="8" r="6.900" /></svg>
			</button>
			<button aria-label="Task view" className="flex w-9 items-center justify-center">
				<svg width="17" height="16" viewBox="0 0 17 16" fill="none" stroke="#fff" strokeWidth="1.200"><path d="M1 0v2.500h10V0M1 5h10v6H1zM1 16v-2.500h10V16M15 0v3.500M15 8.500V16" /><path d="M13.500 4.500h3v3h-3z" fill="#fff" stroke="none" /></svg>
			</button>
			<div className="mx-[6px] my-2 w-1 border-x border-[#5e4566]" />
			<button aria-label="Chrome" className="ml-[6px] flex w-[37px] flex-col items-center pt-2">
				<svg width="14" height="14" viewBox="0 0 14 14">
					<circle cx="7" cy="7" r="7" fill="#34a060" />
					<path d="M1 3.400A7 7 0 0 1 13 3.500H7L4 8.600z" fill="#dd4b3e" />
					<path d="M13 3.500A7 7 0 0 1 6.500 14L10 8.500 7 3.500z" fill="#fccd3c" />
					<circle cx="7" cy="7" r="3.300" fill="#fff" />
					<circle cx="7" cy="7" r="2.600" fill="#4583ec" />
				</svg>
				<span className="mt-auto flex h-[2px] w-7 bg-[#b58ac0]"><span className="w-[19px] bg-[#f0a5ff]" /></span>
			</button>
			<button aria-label="File Explorer" className="flex w-[37px] flex-col items-center pt-2">
				<svg width="16" height="14" viewBox="0 0 16 14"><path d="M0 0h6l1.500 2H16v11H0z" fill="#f0ad1e" /><path d="M0 3h16v10H0z" fill="#ffdd73" /><path d="M3 14V9c0-1 .8-1.700 2-1.700h6c1.200 0 2 .7 2 1.700v5h-3v-3.500H6V14z" fill="#3b97dc" /></svg>
				<span className="mt-auto h-[2px] w-7 bg-[#f0a5ff]" />
			</button>
			<button aria-label="UiPath" className="flex w-[37px] flex-col items-center pt-[7px]"><UiLogo /></button>
			<button aria-label="UiPath Studio" className="flex w-9 flex-col items-center border-r-4 border-[#411047] bg-[#5d0d6a] pt-[7px]">
				<UiLogo />
				<span className="mt-auto h-[2px] w-8 bg-[#f0a5ff]" />
			</button>
			<div className="ml-auto flex items-center">
				<svg width="23" height="22" viewBox="0 0 23 22">
					<circle cx="10.500" cy="10.500" r="9.800" fill="#1797d4" stroke="#fff" strokeWidth="1.400" />
					<path d="M7 8.500c0-5 7.500-4.500 7 0-.3 2.200-3.500 2.300-3.500 5M10.500 15v2.300" fill="none" stroke="#fff" strokeWidth="2.300" />
					<circle cx="18" cy="16.500" r="4.700" fill="#f5a81c" />
					<path d="M17.200 15.500h1.600V19h-1.600zM17.200 13.200h1.600v1.500h-1.600z" fill="#fff" />
				</svg>
				<svg width="12" height="7" viewBox="0 0 12 7" fill="none" stroke="#fff" strokeWidth="1.200" className="ml-[9px]"><path d="M.5 6.500L6 1l5.500 5.500" /></svg>
				<svg width="14" height="14" viewBox="0 0 14 14" fill="none" stroke="#ddd" className="ml-3"><path d="M1 13C1 6.500 6 1.500 13 1.500M4 13c0-5 4-8.500 9-8.500M7 13c0-3.500 2.500-5.500 6-5.500M10 13c0-1.500 1-2.500 3-2.500" /><circle cx="12" cy="12.500" r="1" fill="#fff" /></svg>
				<svg width="16" height="14" viewBox="0 0 16 14" fill="none" className="ml-2"><path d="M1 4.500h13v6H1z" stroke="#fff" /><path d="M2.500 6h6v3h-6z" fill="#fff" /><circle cx="11" cy="9.500" r="4.500" fill="#17922b" /><path d="M11 12V9M9 8.500c0-2.500 4-2.500 4 0S9 10.500 9 8.500" stroke="#fff" /></svg>
				<svg width="17" height="14" viewBox="0 0 17 14" fill="none" stroke="#fff" className="ml-2"><path d="M.6 4.500h2.500L6.500 1.500v11L3.100 9.500H.6zM9 5c1 1.200 1 2.800 0 4M11.500 3.500c2 2.300 2 4.700 0 7M14 2c2.800 3.500 2.800 6.500 0 10" /></svg>
				<span className="ml-[9px]">ENG</span>
				<time className="ml-2 w-[66px] text-center leading-[15px] whitespace-nowrap">15:12<br />05-03-2020</time>
				<svg width="16" height="17" viewBox="0 0 16 17" fill="none" stroke="#fff" strokeWidth="1.200" className="mr-[20px] ml-[14px]"><path d="M.8.8h14.400v12H10.500L8 15.500l-2.500-2.700H.8z" /></svg>
				<div className="mr-1 h-8 w-px bg-[#68506e]" />
			</div>
		</footer>
	);
}

export default function App() {
	return (
		<div className="flex min-h-screen flex-col bg-[#f1f1f1] font-['Open_Sans',sans-serif]">
			<TitleBar />
			<Ribbon />
			<div className="flex flex-1 gap-[6px] pt-[6px] pr-[7px] pl-[6px]">
				<ActivitiesPanel />
				<Designer />
				<PropertiesPanel />
			</div>
			<div className="flex h-[31px] items-end gap-3 pl-[6px] text-[11px] text-[#444]">
				<button className="border-b-[6px] border-[#cdcdcd] leading-[19px]">Output</button>
				<button className="border-b-[6px] border-[#cdcdcd] leading-[19px]">Error List</button>
				<button className="border-b-[6px] border-[#cdcdcd] leading-[19px]">Breakpoints</button>
			</div>
			<StatusBar />
			<Taskbar />
		</div>
	);
}
